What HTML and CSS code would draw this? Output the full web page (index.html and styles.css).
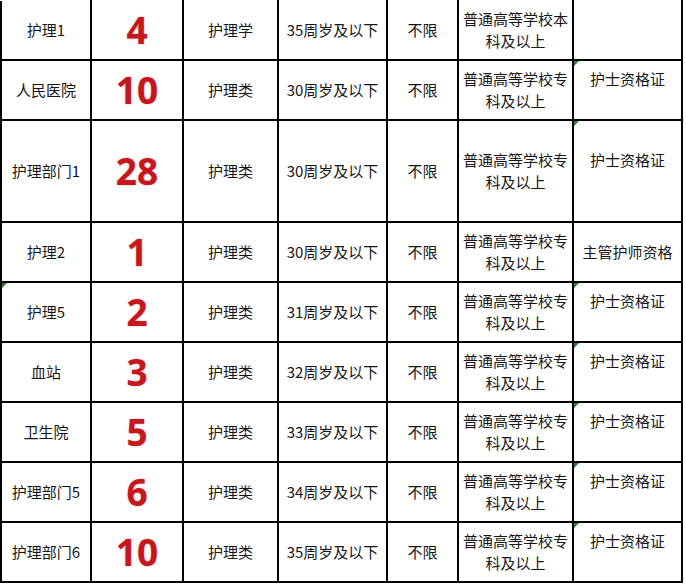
FILE: index.html
```html
<!DOCTYPE html>
<html lang="zh">
<head>
<meta charset="utf-8">
<link rel="stylesheet" href="styles.css">
</head>
<body>
<table class="jobs">
  <colgroup>
    <col class="c1"><col class="c2"><col class="c3"><col class="c4"><col class="c5"><col class="c6"><col class="c7">
  </colgroup>
  <tbody>
    <tr>
      <td>护理1</td><td class="num">4</td><td>护理学</td><td>35周岁及以下</td><td>不限</td><td>普通高等学校本科及以上</td><td></td>
    </tr>
    <tr>
      <td>人民医院</td><td class="num">10</td><td>护理类</td><td>30周岁及以下</td><td>不限</td><td>普通高等学校专科及以上</td><td class="cert mark">护士资格证</td>
    </tr>
    <tr class="tall">
      <td>护理部门1</td><td class="num">28</td><td>护理类</td><td>30周岁及以下</td><td>不限</td><td>普通高等学校专科及以上</td><td class="cert mark">护士资格证</td>
    </tr>
    <tr>
      <td>护理2</td><td class="num">1</td><td>护理类</td><td>30周岁及以下</td><td>不限</td><td>普通高等学校专科及以上</td><td>主管护师资格</td>
    </tr>
    <tr>
      <td class="mark">护理5</td><td class="num">2</td><td>护理类</td><td>31周岁及以下</td><td>不限</td><td>普通高等学校专科及以上</td><td class="cert mark">护士资格证</td>
    </tr>
    <tr>
      <td>血站</td><td class="num">3</td><td>护理类</td><td>32周岁及以下</td><td>不限</td><td>普通高等学校专科及以上</td><td class="cert mark">护士资格证</td>
    </tr>
    <tr>
      <td>卫生院</td><td class="num">5</td><td>护理类</td><td>33周岁及以下</td><td>不限</td><td>普通高等学校专科及以上</td><td class="cert mark">护士资格证</td>
    </tr>
    <tr>
      <td>护理部门5</td><td class="num">6</td><td>护理类</td><td>34周岁及以下</td><td>不限</td><td>普通高等学校专科及以上</td><td class="cert mark">护士资格证</td>
    </tr>
    <tr>
      <td>护理部门6</td><td class="num">10</td><td>护理类</td><td>35周岁及以下</td><td>不限</td><td>普通高等学校专科及以上</td><td class="cert mark">护士资格证</td>
    </tr>
  </tbody>
</table>
</body>
</html>
```

FILE: styles.css
```css
html, body {
  margin: 0;
  padding: 0;
  background: #ffffff;
}

.jobs {
  border-collapse: collapse;
  table-layout: fixed;
  width: 681px;
  margin-top: -1px;
  font-family: "Noto Sans CJK SC", "Noto Sans", sans-serif;
  font-size: 15px;
  line-height: 22px;
  color: #161616;
}

.c1 { width: 90px; }
.c2 { width: 92px; }
.c3 { width: 95px; }
.c4 { width: 109px; }
.c5 { width: 71px; }
.c6 { width: 115px; }
.c7 { width: 109px; }

.jobs td {
  border: 2px solid #000;
  height: 60px;
  padding: 0 4px;
  text-align: center;
  vertical-align: middle;
  position: relative;
  box-sizing: border-box;
}

.jobs tr:first-child td {
  border-top-color: #ffffff;
}

.jobs tr.tall td {
  height: 102px;
}

.jobs td.num {
  font-family: "Open Sans", "DejaVu Sans", sans-serif;
  font-weight: 700;
  font-size: 37px;
  line-height: 40px;
  color: #c4181e;
  text-shadow: 0 0 2px rgba(235, 90, 90, 0.55);
}

.jobs td.cert {
  padding-bottom: 22px;
}

.jobs td.mark::before {
  content: "";
  position: absolute;
  left: 0;
  top: 0;
  width: 0;
  height: 0;
  border-top: 5px solid #2e7d32;
  border-right: 5px solid transparent;
}
```
